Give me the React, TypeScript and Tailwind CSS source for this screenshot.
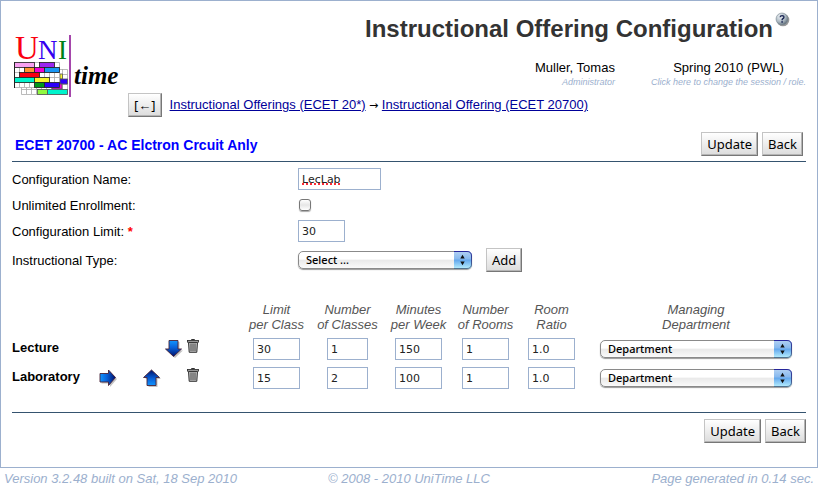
import React from "react";

const uiFont = "font-['Lucida_Grande','Noto_Sans',sans-serif]";

function ClassicButton({ children }: { children: React.ReactNode }) {
  return (
    <button
      type="button"
      className={`${uiFont} h-6 border border-t-[#c4c4c4] border-l-[#c4c4c4] border-r-[#777777] border-b-[#777777] bg-linear-to-b from-white to-[#dcdcdc] px-[5px] text-[13px] leading-5 whitespace-nowrap text-black shadow-[inset_-1px_-1px_0_#b5b5b5]`}
    >
      {children}
    </button>
  );
}

function TextField({
  id,
  label,
  value,
  width,
  misspelled,
}: {
  id?: string;
  label?: string;
  value: string;
  width: string;
  misspelled?: boolean;
}) {
  return (
    <input
      id={id}
      aria-label={label}
      type="text"
      defaultValue={value}
      spellCheck={false}
      className={`${width} block h-[22px] border border-[#9cb0ce] bg-white px-[3px] font-['DejaVu_Sans',Verdana,sans-serif] text-[11px] text-[#222222] ${
        misspelled ? "underline decoration-red-500 decoration-dotted decoration-2" : ""
      }`}
    />
  );
}

function AquaSelect({
  id,
  label,
  option,
  width,
}: {
  id?: string;
  label?: string;
  option: string;
  width: string;
}) {
  return (
    <div className={`${width} relative h-[18px]`}>
      <select
        id={id}
        aria-label={label}
        className={`${uiFont} block h-[18px] w-full appearance-none rounded-[5px] border border-[#8a8a8a] bg-linear-to-b from-white from-45% via-[#e9e9e9] via-50% to-[#fafafa] pl-[7px] text-[11px] leading-4 font-medium text-black shadow-[0_1px_1px_#999999]`}
      >
        <option>{option}</option>
      </select>
      <svg
        className="pointer-events-none absolute top-0 right-0"
        width="18"
        height="18"
        viewBox="0 0 18 18"
        aria-hidden="true"
      >
        <defs>
          <linearGradient id="aquaCap" x1="0" y1="0" x2="0" y2="1">
            <stop offset="0" stopColor="#b4d2f2" />
            <stop offset="0.45" stopColor="#86b8ee" />
            <stop offset="0.5" stopColor="#62a6ec" />
            <stop offset="1" stopColor="#baf2ff" />
          </linearGradient>
          <linearGradient id="aquaRim" x1="0" y1="0" x2="0" y2="1">
            <stop offset="0" stopColor="#26269a" />
            <stop offset="1" stopColor="#50718f" />
          </linearGradient>
        </defs>
        <path d="M0 0H13Q18 0 18 5V13Q18 18 13 18H0Z" fill="url(#aquaCap)" />
        <path d="M0 .5H13Q17.500 .5 17.500 5V13Q17.500 17.500 13 17.500H0" fill="none" stroke="url(#aquaRim)" />
        <path d="M6.300 7.500L8.500 3.800L10.700 7.500ZM6.300 10.500L8.500 14.200L10.700 10.500Z" fill="#111" />
      </svg>
    </div>
  );
}

function Logo() {
  const blocks: [number, number, number, string][] = [
    [0, 0, 4, "#f7a0f0"],
    [5, 0, 3, "#9b26f0"],
    [2, 1, 2, "#ff9430"],
    [4, 1, 2, "#f400d4"],
    [6, 1, 3, "#1896f4"],
    [1, 2, 4, "#f80012"],
    [0, 3, 4, "#00f4cc"],
    [4, 3, 3, "#f8f830"],
    [4, 4, 2, "#00981c"],
    [6, 4, 3, "#2c00f8"],
  ];
  return (
    <svg width="112" height="76" viewBox="12 24 112 76" role="img" aria-label="UniTime">
      <g fontFamily="'Liberation Serif', serif">
        <text x="15" y="59" fontSize="33" fill="#fa0010">U</text>
        <text x="38" y="59" fontSize="27" fill="#3500f0">N</text>
        <text x="58" y="59" fontSize="27" fill="#008018">I</text>
      </g>
      <g stroke="#555" strokeWidth=".8">
        <path
          d="M21.500 69.500H67.500V94.500H21.500ZM26.500 69V94M31.500 69V94M36.500 69V94M41.500 69V94M46.500 69V94M51.500 69V94M56.500 69V94M62.500 69V94M21.500 74.500H67.500M21.500 79.500H67.500M21.500 84.500H67.500M21.500 89.500H67.500"
          fill="#fff"
          stroke="#aaa"
        />
        <rect x="60" y="74" width="2.500" height="5" fill="#f8f830" />
        <rect x="60" y="79" width="7.500" height="5" fill="#2c00f8" />
        <rect x="52" y="84" width="10" height="5" fill="#f400d4" />
        <rect x="37.500" y="89.500" width="10" height="5" fill="#90f840" />
        <rect x="47.500" y="89.500" width="20" height="5" fill="#00f4cc" />
      </g>
      <path
        d="M14.500 62.500H59.500V87.500H14.500ZM19.500 62V87M24.500 62V87M29.500 62V87M34.500 62V87M39.500 62V87M44.500 62V87M49.500 62V87M54.500 62V87M14.500 67.500H59.500M14.500 72.500H59.500M14.500 77.500H59.500M14.500 82.500H59.500"
        fill="#fff"
        stroke="#aaa"
        strokeWidth=".8"
      />
      {blocks.map(([col, row, span, color]) => (
        <rect
          key={`${col}-${row}`}
          x={14.5 + col * 5}
          y={62.5 + row * 5}
          width={span * 5}
          height="5"
          fill={color}
          stroke="#222"
          strokeWidth=".8"
        />
      ))}
      <path d="M14.500 62V88" stroke="#222" />
      <path d="M70 35V97" stroke="#8e1796" strokeWidth="1.600" />
      <text
        x="74"
        y="84"
        fontFamily="'Brush Script MT', 'Liberation Serif', cursive"
        fontSize="25"
        fontStyle="italic"
        fontWeight="bold"
        fill="#000"
      >
        time
      </text>
    </svg>
  );
}

function HelpIcon() {
  return (
    <svg width="15" height="15" viewBox="0 0 15 15" aria-hidden="true">
      <defs>
        <radialGradient id="helpBall" cx=".35" cy=".3" r=".75">
          <stop offset="0" stopColor="#eef2f5" />
          <stop offset=".6" stopColor="#a9b6c0" />
          <stop offset="1" stopColor="#5a6873" />
        </radialGradient>
      </defs>
      <circle cx="8" cy="8" r="6.300" fill="#999" />
      <circle cx="7" cy="7" r="6" fill="url(#helpBall)" stroke="#7c8a94" strokeWidth=".6" />
      <path d="M5.100 5.300Q5.200 3.600 7.100 3.600Q9 3.700 8.900 5.300Q8.700 6.300 7.600 6.900Q7.100 7.300 7.100 8.200" fill="none" stroke="#1c2755" strokeWidth="1.400" />
      <rect x="6.300" y="9.200" width="1.600" height="1.500" fill="#1c2755" />
    </svg>
  );
}

function ArrowIcon({ direction }: { direction: "right" | "up" | "down" }) {
  const shapes = {
    right: "M1 4.500H9.500V1L16.500 8.500L9.500 16.500V13H1Z",
    up: "M5 16.500H14V8.500H17.500L9.500 1L1.500 8.500H5Z",
    down: "M5 .5H14V9H17.500L9.500 16.500L1.500 9H5Z",
  };
  const ends = {
    right: { x1: "0", y1: "0", x2: "1", y2: "0" },
    up: { x1: "0", y1: "1", x2: "0", y2: "0" },
    down: { x1: "0", y1: "0", x2: "0", y2: "1" },
  };
  return (
    <svg className="block" width="19" height="19" viewBox="0 0 19 19" aria-hidden="true">
      <defs>
        <linearGradient id={`arrow-${direction}`} {...ends[direction]}>
          <stop offset="0" stopColor="#1195ff" />
          <stop offset=".45" stopColor="#0860d8" />
          <stop offset="1" stopColor="#001068" />
        </linearGradient>
      </defs>
      <path d={shapes[direction]} transform="translate(1.500 1.500)" fill="#888" opacity=".5" />
      <path d={shapes[direction]} fill={`url(#arrow-${direction})`} stroke="#482338" strokeWidth=".9" />
    </svg>
  );
}

function TrashIcon() {
  return (
    <svg className="block" width="12" height="14" viewBox="0 0 12 14" aria-hidden="true">
      <path d="M1.500 3.500H10.500L9.800 13.300H2.200Z" fill="#bbb" stroke="#333" />
      <path d="M4 4.500V12M6 4.500V12M8 4.500V12" stroke="#444" strokeWidth=".9" />
      <path d="M4.500 1V.5H7.500V1" fill="none" stroke="#333" />
      <rect x=".5" y="1.500" width="11" height="1.600" fill="#ccc" stroke="#333" strokeWidth=".9" />
    </svg>
  );
}

function IconButton({ label, children }: { label: string; children: React.ReactNode }) {
  return (
    <button type="button" aria-label={label} className="block">
      {children}
    </button>
  );
}

const subparts = [
  { name: "Lecture", limit: "30", classes: "1", minutes: "150", rooms: "1", ratio: "1.0", right: false, up: false, down: true },
  { name: "Laboratory", limit: "15", classes: "2", minutes: "100", rooms: "1", ratio: "1.0", right: true, up: true, down: false },
];

const headings: [string, string][] = [
  ["Limit", "per Class"],
  ["Number", "of Classes"],
  ["Minutes", "per Week"],
  ["Number", "of Rooms"],
  ["Room", "Ratio"],
  ["Managing", "Department"],
];

export default function App() {
  return (
    <div className="bg-white font-['Liberation_Sans',Arial,sans-serif] text-[13px] leading-4 text-black">
      <main className="border border-[#9cb0ce] px-[11px] pb-6">
        <header className="flex pt-[11px]">
          <div className="w-[116px] shrink-0 pt-3">
            <Logo />
          </div>
          <div className="flex-1">
            <div className="flex items-start justify-end pr-4">
              <h1 className="pt-[3px] text-2xl leading-7 font-bold text-[#333333]">
                Instructional Offering Configuration
              </h1>
              <button type="button" aria-label="Help" className="ml-0.5">
                <HelpIcon />
              </button>
            </div>
            <div className="mt-4 flex justify-end gap-9 pt-px">
              <div className="text-right">
                <div>Muller, Tomas</div>
                <div className="text-[9px] leading-3 text-[#9cb0ce] italic">Administrator</div>
              </div>
              <div className="text-center">
                <div>Spring 2010 (PWL)</div>
                <a href="#session" className="block text-[9px] leading-3 text-[#9cb0ce] italic">
                  Click here to change the session / role.
                </a>
              </div>
            </div>
            <nav className="mt-[5px] flex items-center gap-2" aria-label="Breadcrumb">
              <ClassicButton>[←]</ClassicButton>
              <div className="pt-px">
                <a href="#offerings" className="text-[#000099] underline">Instructional Offerings (ECET 20*)</a>
                <span className="font-['DejaVu_Sans',sans-serif] text-[11px]"> → </span>
                <a href="#offering" className="text-[#000099] underline">Instructional Offering (ECET 20700)</a>
              </div>
            </nav>
          </div>
        </header>

        <div className="mt-[15px] flex items-center justify-between border-b border-[#35536f] pr-[3px] pb-[5px] pl-[3px]">
          <h2 className="pt-0.5 text-sm leading-4 font-bold text-[#0000ff]">ECET 20700 - AC Elctron Crcuit Anly</h2>
          <div className="flex gap-1">
            <ClassicButton>Update</ClassicButton>
            <ClassicButton>Back</ClassicButton>
          </div>
        </div>

        <div className="mt-1.5 grid grid-cols-[286px_1fr] items-center gap-y-1">
          <label htmlFor="config-name" className="pt-0.5">Configuration Name:</label>
          <TextField id="config-name" value="LecLab" width="w-[83px]" misspelled />
          <label htmlFor="unlimited" className="pt-0.5">Unlimited Enrollment:</label>
          <div className="flex h-[22px] items-center">
            <input
              id="unlimited"
              type="checkbox"
              className="ml-px size-3 appearance-none rounded-[3px] border border-[#777777] bg-linear-to-b from-white via-[#e6e6e6] to-white shadow-[0_1px_1px_#aaaaaa]"
            />
          </div>
          <label htmlFor="config-limit" className="pt-0.5">
            Configuration Limit: <span className="font-bold text-[#ff0000]">*</span>
          </label>
          <TextField id="config-limit" value="30" width="w-[47px]" />
          <label htmlFor="itype" className="pt-1">Instructional Type:</label>
          <div className="flex items-center gap-3.5 pt-0.5">
            <AquaSelect id="itype" option="Select ..." width="w-[174px]" />
            <ClassicButton>Add</ClassicButton>
          </div>
        </div>

        <table className="mt-[30px] w-full table-fixed border-collapse">
          <colgroup>
            <col className="w-[85px]" />
            <col className="w-[44px]" />
            <col className="w-[22px]" />
            <col className="w-[22px]" />
            <col className="w-14" />
            <col className="w-[71px]" />
            <col className="w-[71px]" />
            <col className="w-[71px]" />
            <col className="w-[63px]" />
            <col className="w-[69px]" />
            <col />
          </colgroup>
          <thead>
            <tr>
              <td colSpan={5} />
              {headings.map(([top, bottom]) => (
                <th key={top + bottom} className="pb-1.5 text-center leading-[15px] font-normal text-[#555555] italic">
                  {top}
                  <br />
                  {bottom}
                </th>
              ))}
            </tr>
          </thead>
          <tbody>
            {subparts.map((part) => (
              <tr key={part.name} className="h-[29px] align-top">
                <th scope="row" className="pt-0.5 text-left font-bold">{part.name}</th>
                <td className="pt-0.5 pl-0.5">
                  {part.right && (
                    <IconButton label={`Indent ${part.name}`}><ArrowIcon direction="right" /></IconButton>
                  )}
                </td>
                <td className="pt-0.5 pl-px">
                  {part.up && (
                    <IconButton label={`Move ${part.name} up`}><ArrowIcon direction="up" /></IconButton>
                  )}
                </td>
                <td className="pt-0.5 pl-px">
                  {part.down && (
                    <IconButton label={`Move ${part.name} down`}><ArrowIcon direction="down" /></IconButton>
                  )}
                </td>
                <td className="pt-px pl-0.5">
                  <IconButton label={`Delete ${part.name}`}><TrashIcon /></IconButton>
                </td>
                <td className="pl-3"><TextField label={`${part.name} limit per class`} value={part.limit} width="w-[47px]" /></td>
                <td className="pl-[15px]"><TextField label={`${part.name} number of classes`} value={part.classes} width="w-[41px]" /></td>
                <td className="pl-3"><TextField label={`${part.name} minutes per week`} value={part.minutes} width="w-[47px]" /></td>
                <td className="pl-2"><TextField label={`${part.name} number of rooms`} value={part.rooms} width="w-[47px]" /></td>
                <td className="pl-[11px]"><TextField label={`${part.name} room ratio`} value={part.ratio} width="w-[47px]" /></td>
                <td className="px-3.5 pt-0.5"><AquaSelect label={`${part.name} managing department`} option="Department" width="w-full" /></td>
              </tr>
            ))}
          </tbody>
        </table>

        <div className="mt-4 flex justify-end gap-1 border-t border-[#35536f] pt-1.5">
          <ClassicButton>Update</ClassicButton>
          <ClassicButton>Back</ClassicButton>
        </div>
      </main>

      <footer className="flex justify-between px-1 pt-[3px] text-[#9cb0ce] italic">
        <span className="flex-1">Version 3.2.48 built on Sat, 18 Sep 2010</span>
        <span>© 2008 - 2010 UniTime LLC</span>
        <span className="flex-1 text-right">Page generated in 0.14 sec.</span>
      </footer>
    </div>
  );
}
